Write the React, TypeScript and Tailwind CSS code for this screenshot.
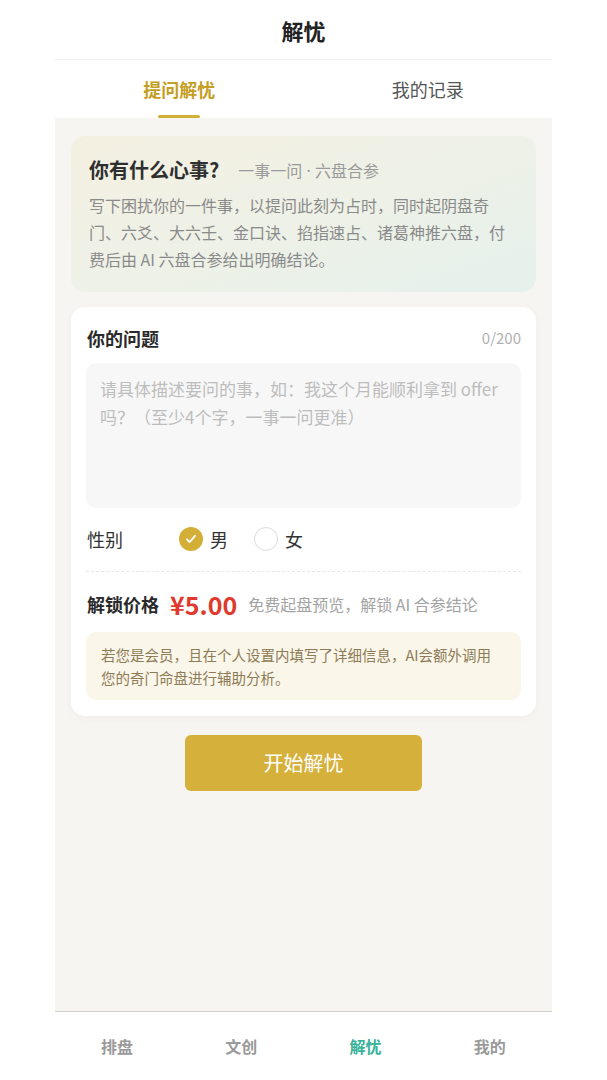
import React, { useState } from "react";

const FONT = "font-['Noto_Sans_CJK_SC','Noto_Sans',sans-serif]";

export default function App() {
  const [gender, setGender] = useState<"m" | "f">("m");
  const [text, setText] = useState("");

  return (
    <div className={`min-h-screen w-full bg-white flex justify-center ${FONT}`}>
      <div className="w-[497px] h-[1080px] flex flex-col">
        {/* header */}
        <div className="h-[60px] shrink-0 flex items-center justify-center border-b border-[#efefef]">
          <span className="text-[22px] font-bold text-[#222] leading-none pt-[1px]">解忧</span>
        </div>

        {/* tabs */}
        <div className="h-[58px] shrink-0 grid grid-cols-2">
          <div className="relative flex items-center justify-center">
            <span className="text-[18px] font-bold text-[#c59e24]">提问解忧</span>
            <span className="absolute bottom-0 left-1/2 -translate-x-1/2 w-[42px] h-[3px] rounded-full bg-[#d4af37]" />
          </div>
          <div className="flex items-center justify-center">
            <span className="text-[18px] text-[#555]">我的记录</span>
          </div>
        </div>

        {/* main */}
        <div className="flex-1 bg-[#f6f5f1] px-[16px] pt-[18px] flex flex-col">
          {/* intro card */}
          <div className="rounded-[14px] bg-linear-to-br from-[#f4f0e1] via-[#eef1e7] to-[#e5f1ec] px-[18px] pt-[20px] pb-[19px]">
            <div className="flex items-center h-[28px]">
              <span className="text-[20px] font-bold text-[#2f2f2f] leading-[28px]">你有什么心事?</span>
              <span className="ml-[19px] text-[16px] text-[#9a9a9a] leading-[28px]">
                一事一问<span className="font-['Noto_Sans',sans-serif]"> · </span>六盘合参
              </span>
            </div>
            <p className="mt-[8px] text-[16px] leading-[27px] text-[#8a8a8a]">
              写下困扰你的一件事，以提问此刻为占时，同时起阴盘奇门、六爻、大六壬、金口诀、掐指速占、诸葛神推六盘，付费后由 AI 六盘合参给出明确结论。
            </p>
          </div>

          {/* form card */}
          <div className="mt-[15px] rounded-[14px] bg-white px-[15px] pt-[18px] pb-[16px] shadow-[0_2px_10px_rgba(0,0,0,0.03)]">
            <div className="flex items-center justify-between h-[26px] pl-[1px]">
              <span className="text-[18px] font-bold text-[#2a2a2a]">你的问题</span>
              <span className="text-[15px] text-[#b0b0b0]">{text.length}/200</span>
            </div>
            <textarea
              value={text}
              onChange={(e) => setText(e.target.value.slice(0, 200))}
              placeholder="请具体描述要问的事，如：我这个月能顺利拿到 offer 吗？（至少4个字，一事一问更准）"
              className="mt-[12px] block w-full h-[145px] resize-none rounded-[10px] bg-[#f7f7f7] px-[14px] pt-[12px] text-[17px] leading-[28px] text-[#333] placeholder:text-[#bdbdbd] outline-none"
            />

            {/* gender */}
            <div className="mt-[11px] h-[40px] flex items-center pl-[1px]">
              <span className="w-[92px] text-[18px] text-[#333]">性别</span>
              <button onClick={() => setGender("m")} className="flex items-center">
                {gender === "m" ? (
                  <span className="w-[24px] h-[24px] rounded-full bg-[#d4af37] flex items-center justify-center">
                    <svg width="14" height="14" viewBox="0 0 14 14" fill="none">
                      <path d="M3 7.3l2.6 2.8L11 3.8" stroke="white" strokeWidth="1.8" strokeLinecap="round" strokeLinejoin="round" />
                    </svg>
                  </span>
                ) : (
                  <span className="w-[24px] h-[24px] rounded-full border-[1.5px] border-[#dcdcdc] bg-white" />
                )}
                <span className="ml-[7px] text-[18px] text-[#333]">男</span>
              </button>
              <button onClick={() => setGender("f")} className="ml-[26px] flex items-center">
                {gender === "f" ? (
                  <span className="w-[24px] h-[24px] rounded-full bg-[#d4af37] flex items-center justify-center">
                    <svg width="14" height="14" viewBox="0 0 14 14" fill="none">
                      <path d="M3 7.3l2.6 2.8L11 3.8" stroke="white" strokeWidth="1.8" strokeLinecap="round" strokeLinejoin="round" />
                    </svg>
                  </span>
                ) : (
                  <span className="w-[24px] h-[24px] rounded-full border-[1.5px] border-[#dcdcdc] bg-white" />
                )}
                <span className="ml-[7px] text-[18px] text-[#333]">女</span>
              </button>
            </div>

            <div className="mt-[12px] border-t border-dashed border-[#e6e6e6]" />

            {/* price */}
            <div className="mt-[16px] h-[32px] flex items-center pl-[1px]">
              <span className="text-[18px] font-bold text-[#2a2a2a]">解锁价格</span>
              <span className="ml-[11px] text-[25px] font-bold text-[#e0392e] leading-none">¥5.00</span>
              <span className="ml-[11px] text-[16px] text-[#a3a3a3]">免费起盘预览，解锁 AI 合参结论</span>
            </div>

            <div className="mt-[12px] rounded-[10px] bg-[#faf6ea] pl-[15px] pr-[24px] py-[11px] text-[14.5px] leading-[23px] text-[#8d7b56]">
              若您是会员，且在个人设置内填写了详细信息，AI会额外调用您的奇门命盘进行辅助分析。
            </div>
          </div>

          <div className="mt-[19px] flex justify-center">
            <button className="w-[237px] h-[56px] rounded-[6px] bg-[#d5b03a] text-white text-[20px]">
              开始解忧
            </button>
          </div>
        </div>

        {/* bottom nav */}
        <div className="h-[69px] shrink-0 border-t border-[#d0d0d0] bg-white grid grid-cols-4">
          {[
            { t: "排盘", a: false },
            { t: "文创", a: false },
            { t: "解忧", a: true },
            { t: "我的", a: false },
          ].map((n) => (
            <div key={n.t} className="flex items-center justify-center">
              <span className={`text-[16px] font-bold ${n.a ? "text-[#37b39a]" : "text-[#9a9a9a]"}`}>{n.t}</span>
            </div>
          ))}
        </div>
      </div>
    </div>
  );
}
